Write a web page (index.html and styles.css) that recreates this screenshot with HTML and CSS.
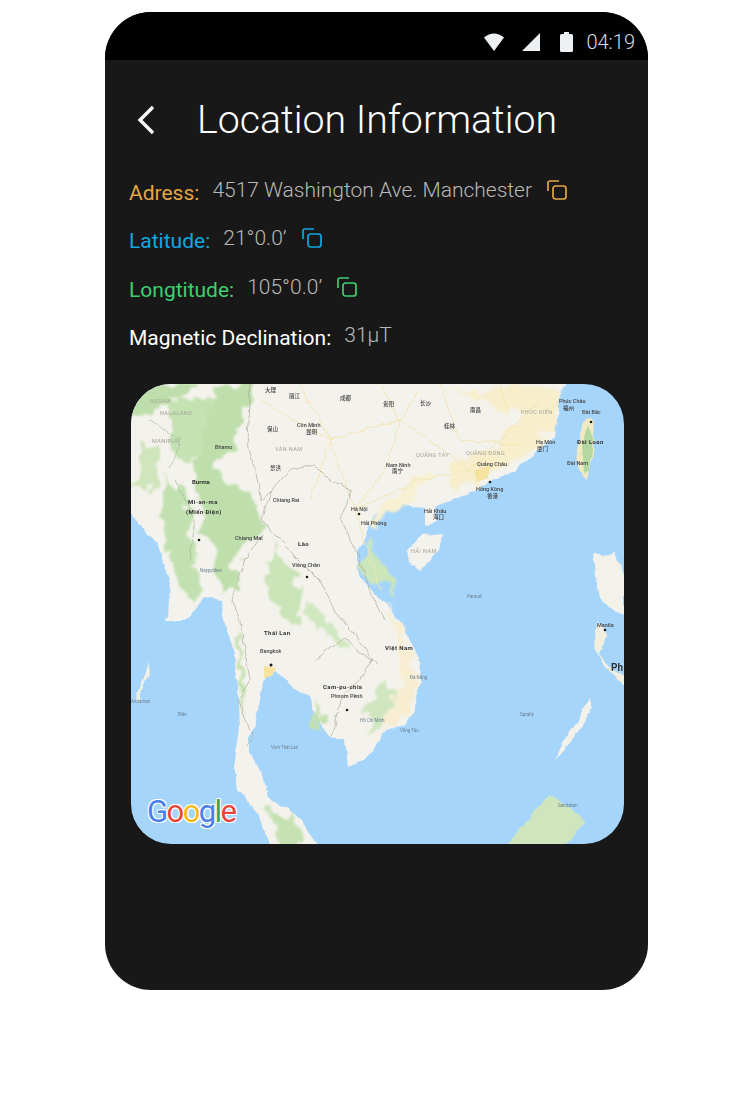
FILE: index.html
```html
<!DOCTYPE html>
<html lang="en">

<head>
    <meta charset="UTF-8">
    <meta name="viewport" content="width=device-width, initial-scale=1.0">
    <title>Location Information</title>
    <link rel="stylesheet" href="styles.css">
</head>

<body>
    <section class="phone">
        <div class="statusBar">
            <svg class="wifi" viewBox="0 0 20 18"><path d="M0 4.500Q10-3.500 20 4.500L10 18Z" fill="#eef1f4"/></svg>
            <svg class="signal" viewBox="0 0 18 18"><path d="M18 0V18H0Z" fill="#eef1f4"/></svg>
            <svg class="battery" viewBox="0 0 13 20"><path d="M4 0H9V2H11.500Q13 2 13 3.500V18.500Q13 20 11.500 20H1.500Q0 20 0 18.500V3.500Q0 2 1.500 2H4Z" fill="#eef1f4"/></svg>
            <span class="clock">04:19</span>
        </div>

        <div class="header">
            <svg class="back" viewBox="0 0 20 30"><path d="M17 2L4 15L17 28" fill="none" stroke="#fff" stroke-width="3.400"/></svg>
            <h1>Location Information</h1>
        </div>

        <div class="info">
            <div class="row orange">
                <span class="label">Adress:</span>
                <span class="value">4517 Washington Ave. Manchester</span>
                <svg class="copy" viewBox="0 0 20 20"><use href="#copyIcon"/></svg>
            </div>
            <div class="row blue">
                <span class="label">Latitude:</span>
                <span class="value">21°0.0’</span>
                <svg class="copy" viewBox="0 0 20 20"><use href="#copyIcon"/></svg>
            </div>
            <div class="row green">
                <span class="label">Longtitude:</span>
                <span class="value">105°0.0’</span>
                <svg class="copy" viewBox="0 0 20 20"><use href="#copyIcon"/></svg>
            </div>
            <div class="row white">
                <span class="label">Magnetic Declination:</span>
                <span class="value">31µT</span>
            </div>
        </div>

        <div class="map">
            <svg class="mapArt" viewBox="131 384 493 460" preserveAspectRatio="none">
                <defs>
                    <filter id="coast" x="-5%" y="-5%" width="110%" height="110%">
                        <feTurbulence type="fractalNoise" baseFrequency="0.06" numOctaves="3" seed="4"/>
                        <feDisplacementMap in="SourceGraphic" scale="7" xChannelSelector="R" yChannelSelector="G"/>
                        <feGaussianBlur stdDeviation="0.7"/>
                    </filter>
                    <filter id="hills" x="-10%" y="-10%" width="120%" height="120%">
                        <feTurbulence type="fractalNoise" baseFrequency="0.05" numOctaves="4" seed="9"/>
                        <feDisplacementMap in="SourceGraphic" scale="26" xChannelSelector="R" yChannelSelector="G"/>
                        <feGaussianBlur stdDeviation="1.300"/>
                    </filter>
                    <filter id="lines" x="-5%" y="-5%" width="110%" height="110%">
                        <feTurbulence type="fractalNoise" baseFrequency="0.09" numOctaves="2" seed="2"/>
                        <feDisplacementMap in="SourceGraphic" scale="6" xChannelSelector="R" yChannelSelector="G"/>
                        <feGaussianBlur stdDeviation="0.350"/>
                    </filter>
                    <filter id="labelBlur"><feGaussianBlur stdDeviation="0.400"/></filter>
                    <g id="copyIcon" fill="none" stroke="currentColor" stroke-width="1.700" stroke-linejoin="round">
                        <path d="M1 11V3Q1 1 3 1H12"/>
                        <rect x="6" y="6" width="13" height="13" rx="2.500"/>
                    </g>
                </defs>

                <rect x="131" y="384" width="493" height="460" fill="#a6d5fb"/>

                <!-- land -->
                <g filter="url(#coast)">
                    <path fill="#f4f2ec" d="M125 378H568L558 407L555 437L535 453L518 468L492 480L475 492L452 500L433 508L437 523L425 527L425 507L395 503L375 513L368 530L358 550L358 575L375 593L405 627L418 657L422 683L408 723L382 733L375 747L365 760L348 767L345 740L332 740L322 727L308 698L292 683L270 670L263 683L260 700L256 720L249 737L249 753L262 770L268 797L282 807L305 823L322 850H270L258 813L238 790L234 767L240 727L238 687L235 653L223 620L222 600L205 597L192 612L188 620H165L168 617L170 580L158 547L125 507Z"/>
                    <path fill="#f4f2ec" d="M408 550L422 535L443 533L440 550L428 563L420 570L410 562Z"/>
                    <path fill="#f2e9c2" d="M590 418L595 423L593 453L588 480L578 470L577 447L583 423Z"/>
                    <path fill="#f2f1ea" d="M594 553L602 556L615 552L624 575V615L612 610L600 598L596 578Z"/>
                    <path fill="#f3efe0" d="M597 620L608 632L606 645L598 653L612 668L630 680V692L604 664L594 650Z"/>
                    <path fill="#f2f1ea" d="M555 760L575 737L592 710L588 700L578 720L562 743Z"/>
                    <path fill="#cfe5bd" d="M548 793L558 800L585 820L575 833L562 850H502L525 823L542 803Z"/>
                    <path fill="#eef0e6" d="M148 662L150 670L142 690L139 704L136 700L142 680Z"/>
                </g>
                <path fill="#b4d9a0" filter="url(#coast)" d="M590 424L593 440L590 470L584 472L582 445Z"/>

                <!-- warmer coast and green hills -->
                <g filter="url(#hills)">
                    <path fill="#f7eecb" d="M450 390H560L552 430L530 450L495 472L455 492L445 465L500 445L525 415Z"/>
                    <path fill="#f8f0d2" d="M398 497L378 508L372 525L400 505L430 480L420 470Z"/>
                    <path fill="#f7eed2" d="M384 600L400 628L412 657L416 683L404 716L386 726L376 740L392 705L404 675L396 640Z"/>
                    <path fill="#cfe6bf" d="M385 680L398 690L388 716L370 735L366 715Z"/>
                    <path fill="#bedfab" d="M212 384H250L246 420L234 440L214 462L230 488L252 490L262 510L258 532L238 556L240 592L224 592L210 560L200 500L194 470L202 430Z"/>
                    <path fill="#c5e2b3" d="M170 400L212 396L204 440L190 468L170 450Z"/>
                    <path fill="#bedfab" d="M131 384H195L180 398L150 412L131 420Z"/>
                    <path fill="#cfe5bb" d="M140 440L160 450L158 490L150 495L138 480Z"/>
                    <path fill="#c2e1b0" d="M172 470L186 510L202 590L188 605L178 590L168 550L162 510Z"/>
                    <path fill="#c9e4b7" d="M272 545L298 580L306 610L294 632L282 615L268 590Z"/>
                    <path fill="#d0e8c0" d="M310 600L335 625L345 650L325 640L308 620Z"/>
                    <path fill="#c3e1af" d="M236 626L242 650L246 690L242 712L240 687L238 653Z"/>
                    <path fill="#cbe6b9" d="M370 540L392 585L396 600L384 590L362 568Z"/>
                    <path fill="#c3e1af" d="M312 700L322 724L328 736L318 728L310 712Z"/>
                    <path fill="#c6e2b3" d="M268 810L296 826L306 843H278Z"/>
                </g>
                <path fill="#f7e3a0" filter="url(#labelBlur)" d="M474 470L490 466L488 478L477 482Z M264 666L276 668L272 676L264 678Z"/>

                <!-- roads and borders -->
                <g fill="none" filter="url(#lines)">
                    <path stroke="#f3e4ae" stroke-width="0.900" d="M260 400L330 440L355 510M330 440L400 420L470 470M400 420L420 390M470 470L540 400M355 510L420 480L470 470M355 510L380 590M300 384L330 440L310 500M440 384L460 440L520 445M380 384L400 420L385 470L355 510M500 384L510 420"/>
                    <path stroke="#aaa99e" stroke-width="0.700" d="M250 384L247 440L255 470L262 500L272 490L290 470L315 465L330 480L352 490M272 490L262 520L275 535L300 560L320 580L335 612L352 630L372 660L358 680L340 700L332 735M352 490L340 520L358 555L370 590L385 620"/>
                    <path stroke="#aaa99e" stroke-width="0.700" d="M262 535L245 560L232 600L240 620L250 680L238 700M238 700L252 735L246 745M315 660L345 638L358 650L378 665"/>
                    <path stroke="#9cb492" stroke-width="0.600" d="M150 420L180 440L170 470M175 480L195 520L190 560"/>
                </g>

                <!-- place names -->
                <g class="mapLabels" filter="url(#labelBlur)">
                    <text x="192" y="484" class="bold">Burma</text>
                    <text x="188" y="504" class="bold wide">Mi-an-ma</text>
                    <text x="186" y="514" class="bold wide">(Miến Điện)</text>
                    <text x="297" y="427" class="dark">Côn Minh</text>
                    <text x="306" y="434" class="dark">昆明</text>
                    <text x="298" y="546" class="bold wide">Lào</text>
                    <text x="292" y="567" class="dark">Viêng Chăn</text>
                    <text x="351" y="511" class="dark">Hà Nội</text>
                    <text x="361" y="525" class="dark">Hải Phòng</text>
                    <text x="264" y="635" class="bold wide">Thái Lan</text>
                    <text x="260" y="653" class="dark">Bangkok</text>
                    <text x="323" y="689" class="bold wide">Cam-pu-chia</text>
                    <text x="331" y="698" class="dark">Phnom Pênh</text>
                    <text x="385" y="650" class="bold wide">Việt Nam</text>
                    <text x="477" y="466" class="dark">Quảng Châu</text>
                    <text x="476" y="491" class="dark">Hồng Kông</text>
                    <text x="487" y="498" class="dark">香港</text>
                    <text x="559" y="403" class="dark">Phúc Châu</text>
                    <text x="563" y="410" class="dark">福州</text>
                    <text x="577" y="444" class="bold wide">Đài Loan</text>
                    <text x="567" y="465" class="dark">Đài Nam</text>
                    <text x="582" y="414" class="dark">Đài Bắc</text>
                    <text x="597" y="627" class="dark">Manila</text>
                    <text x="611" y="671" class="big">Ph</text>
                    <text x="411" y="553" class="faint">HẢI NAM</text>
                    <text x="466" y="455" class="faint">QUẢNG ĐÔNG</text>
                    <text x="521" y="414" class="faint">PHÚC KIẾN</text>
                    <text x="416" y="457" class="faint">QUẢNG TÂY</text>
                    <text x="275" y="451" class="faint">VÂN NAM</text>
                    <text x="160" y="415" class="faint">NAGALAND</text>
                    <text x="150" y="403" class="faint">ASSAM</text>
                    <text x="152" y="443" class="faint">MANIPUR</text>
                    <text x="386" y="467" class="dark">Nam Ninh</text>
                    <text x="392" y="473" class="dark">南宁</text>
                    <text x="424" y="513" class="dark">Hải Khẩu</text>
                    <text x="433" y="519" class="dark">海口</text>
                    <text x="536" y="444" class="dark">Hạ Môn</text>
                    <text x="537" y="451" class="dark">厦门</text>
                    <text x="420" y="405" class="dark">长沙</text>
                    <text x="470" y="412" class="dark">南昌</text>
                    <text x="444" y="428" class="dark">桂林</text>
                    <text x="383" y="406" class="dark">贵阳</text>
                    <text x="340" y="400" class="dark">成都</text>
                    <text x="265" y="392" class="dark">大理</text>
                    <text x="289" y="398" class="dark">丽江</text>
                    <text x="215" y="449" class="dark">Bhamo</text>
                    <text x="267" y="431" class="dark">保山</text>
                    <text x="270" y="470" class="dark">景洪</text>
                    <text x="273" y="502" class="dark">Chiang Rai</text>
                    <text x="235" y="540" class="dark">Chiang Mai</text>
                    <text x="467" y="598" class="tiny">Paracel</text>
                    <text x="520" y="716" class="tiny">Spratly</text>
                    <text x="410" y="679" class="tiny">Đà Nẵng</text>
                    <text x="400" y="732" class="tiny">Vũng Tàu</text>
                    <text x="558" y="807" class="tiny">Sandakan</text>
                    <text x="131" y="703" class="tiny">Andaman</text>
                    <text x="178" y="716" class="tiny">Biển</text>
                    <text x="271" y="749" class="tiny">Vịnh Thái Lan</text>
                    <text x="360" y="722" class="tiny">Hồ Chí Minh</text>
                    <text x="200" y="572" class="tiny">Naypyidaw</text>
                </g>
                <g fill="#1b1b1b">
                    <circle cx="199" cy="540" r="1.300"/>
                    <circle cx="307" cy="577" r="1.300"/>
                    <circle cx="359" cy="514" r="1.300"/>
                    <circle cx="271" cy="665" r="1.500"/>
                    <circle cx="347" cy="710" r="1.300"/>
                    <circle cx="490" cy="482" r="1.300"/>
                    <circle cx="591" cy="422" r="1.300"/>
                    <circle cx="605" cy="630" r="1.300"/>
                </g>
            </svg>
            <div class="googleLogo"><span class="gBlue">G</span><span class="gRed">o</span><span class="gYellow">o</span><span class="gBlue">g</span><span class="gGreen">l</span><span class="gRed">e</span></div>
        </div>
    </section>
</body>

</html>
```

FILE: styles.css
```css
body {
    margin: 0;
    padding: 12px 0 0 105px;
    background-color: #fff;
    font-family: 'Roboto', sans-serif;
}

.phone {
    width: 543px;
    height: 978px;
    border-radius: 46px;
    overflow: hidden;
    background-color: #181818;
    display: flex;
    flex-direction: column;
}

.statusBar {
    height: 48px;
    background-color: #000;
    display: flex;
    align-items: center;
    justify-content: flex-end;
    padding: 12px 13px 0 0;
    box-sizing: border-box;
}

.wifi {
    width: 20px;
    height: 18px;
    margin-right: 18px;
}

.signal {
    width: 18px;
    height: 18px;
    margin-right: 20px;
}

.battery {
    width: 13px;
    height: 20px;
    margin-right: 13px;
}

.clock {
    color: #d9dde0;
    font-size: 20px;
    font-weight: 300;
}

.header {
    height: 119px;
    display: flex;
    align-items: center;
    padding: 0 0 0 31px;
    box-sizing: border-box;
}

.back {
    width: 20px;
    height: 30px;
    margin-right: 41px;
}

.header h1 {
    margin: 0;
    color: #fff;
    font-size: 39.3px;
    font-weight: 300;
}

.info {
    display: flex;
    flex-direction: column;
    gap: 18.5px;
    padding: 0 0 0 24px;
    margin-top: -3px;
}

.row {
    display: flex;
    align-items: center;
    height: 30px;
    font-size: 21px;
}

.label {
    margin-top: 3px;
    margin-right: 13px;
}

.value {
    color: #b8b8b8;
    font-weight: 300;
    margin-top: -3px;
    margin-right: 15px;
}

.copy {
    width: 20px;
    height: 20px;
    margin-top: -3px;
}

.orange {
    color: #e3a644;
}

.blue {
    color: #10a7e2;
}

.green {
    color: #3ecf70;
}

.white {
    color: #fff;
}

.map {
    position: relative;
    width: 493px;
    height: 460px;
    margin: 32.5px 0 0 26px;
    border-radius: 40px;
    overflow: hidden;
}

.mapArt {
    display: block;
    width: 100%;
    height: 100%;
}

.mapLabels text {
    font-family: 'Roboto', 'Noto Sans CJK SC', sans-serif;
    font-size: 5.500px;
    fill: #4a4a4a;
}

.mapLabels .bold {
    font-weight: 700;
    fill: #333;
    font-size: 6px;
}

.mapLabels .wide {
    letter-spacing: 0.4px;
}

.mapLabels .dark {
    font-weight: 500;
    fill: #444;
}

.mapLabels .big {
    font-weight: 700;
    font-size: 10px;
    fill: #333;
}

.mapLabels .faint {
    font-size: 5.500px;
    letter-spacing: 0.4px;
    fill: #a3a397;
}

.mapLabels .tiny {
    font-size: 4.500px;
    fill: #6b7f8e;
}

.googleLogo {
    position: absolute;
    left: 16px;
    top: 408px;
    font-family: 'Roboto', sans-serif;
    font-size: 31px;
    font-weight: 400;
    line-height: 40px;
    letter-spacing: -1.6px;
    text-shadow: -1px -1px 0 #fff, 1px -1px 0 #fff, -1px 1px 0 #fff, 1px 1px 0 #fff;
}

.gBlue {
    color: #4a80ec;
}

.gRed {
    color: #e8453c;
}

.gYellow {
    color: #f7b916;
}

.gGreen {
    color: #33a853;
}
```
